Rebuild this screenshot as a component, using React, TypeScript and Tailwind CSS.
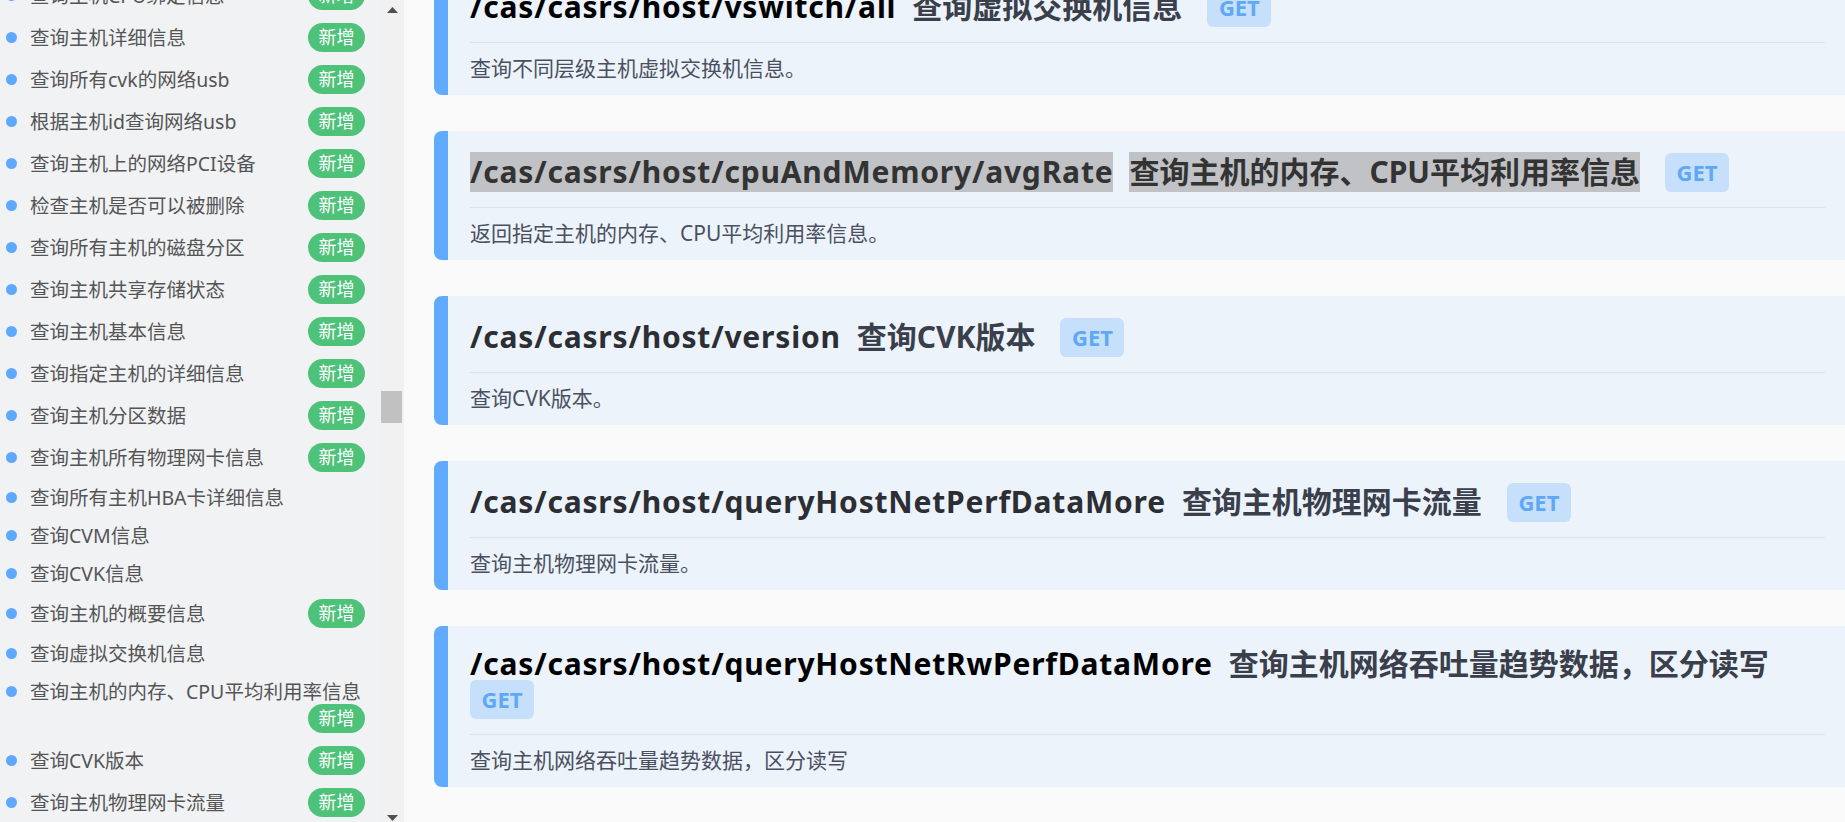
import React from "react";

type NavItem = { label: string; isNew: boolean };

const navItems: NavItem[] = [
  { label: "查询主机CPU绑定信息", isNew: true },
  { label: "查询主机详细信息", isNew: true },
  { label: "查询所有cvk的网络usb", isNew: true },
  { label: "根据主机id查询网络usb", isNew: true },
  { label: "查询主机上的网络PCI设备", isNew: true },
  { label: "检查主机是否可以被删除", isNew: true },
  { label: "查询所有主机的磁盘分区", isNew: true },
  { label: "查询主机共享存储状态", isNew: true },
  { label: "查询主机基本信息", isNew: true },
  { label: "查询指定主机的详细信息", isNew: true },
  { label: "查询主机分区数据", isNew: true },
  { label: "查询主机所有物理网卡信息", isNew: true },
  { label: "查询所有主机HBA卡详细信息", isNew: false },
  { label: "查询CVM信息", isNew: false },
  { label: "查询CVK信息", isNew: false },
  { label: "查询主机的概要信息", isNew: true },
  { label: "查询虚拟交换机信息", isNew: false },
  { label: "查询主机的内存、CPU平均利用率信息", isNew: true },
  { label: "查询CVK版本", isNew: true },
  { label: "查询主机物理网卡流量", isNew: true },
];

type Api = {
  path: string;
  title: string;
  desc: string;
  pathColor: string;
  selected?: boolean;
};

const apis: Api[] = [
  {
    path: "/cas/casrs/host/vswitch/all",
    title: "查询虚拟交换机信息",
    desc: "查询不同层级主机虚拟交换机信息。",
    pathColor: "text-black",
  },
  {
    path: "/cas/casrs/host/cpuAndMemory/avgRate",
    title: "查询主机的内存、CPU平均利用率信息",
    desc: "返回指定主机的内存、CPU平均利用率信息。",
    pathColor: "text-[#333333]",
    selected: true,
  },
  {
    path: "/cas/casrs/host/version",
    title: "查询CVK版本",
    desc: "查询CVK版本。",
    pathColor: "text-[#2c2e33]",
  },
  {
    path: "/cas/casrs/host/queryHostNetPerfDataMore",
    title: "查询主机物理网卡流量",
    desc: "查询主机物理网卡流量。",
    pathColor: "text-[#2c2e33]",
  },
  {
    path: "/cas/casrs/host/queryHostNetRwPerfDataMore",
    title: "查询主机网络吞吐量趋势数据，区分读写",
    desc: "查询主机网络吞吐量趋势数据，区分读写",
    pathColor: "text-black",
  },
];

function Sidebar() {
  return (
    <div className="flex h-full w-[404px] shrink-0">
      {/* List */}
      <div className="h-full w-[381px] overflow-hidden bg-[#f0f2f4]">
        <ul className="mt-[-26px] pl-[6px] pr-[16px]">
          {navItems.map((item) => (
            <li
              key={item.label}
              className="flex flex-wrap items-center py-[6.5px]"
            >
              <div className="flex items-center gap-[13px]">
                <span className="h-[11px] w-[11px] shrink-0 rounded-full bg-[#5fa8ff]" />
                <span className="whitespace-nowrap text-[19.5px] leading-[25px] text-[#555555]">
                  {item.label}
                </span>
              </div>
              {item.isNew && (
                <span className="ml-auto flex h-[29px] w-[57px] items-center justify-center rounded-full bg-[#4fc27a] text-[18px] text-white">
                  新增
                </span>
              )}
            </li>
          ))}
        </ul>
      </div>

      {/* Scrollbar */}
      <div className="flex h-full w-[23px] flex-col bg-[#f1f1f1]">
        <div className="flex h-[20px] items-start justify-center pt-[7px]">
          <svg width="11" height="6" viewBox="0 0 11 6">
            <path d="M5.5 0L11 6H0z" fill="#505050" />
          </svg>
        </div>
        <div className="mt-[371px] h-[32px] w-[21px] bg-[#c1c1c1]" />
        <div className="mt-auto flex h-[20px] items-end justify-center pb-[1px]">
          <svg width="11" height="6" viewBox="0 0 11 6">
            <path d="M0 0H11L5.5 6z" fill="#505050" />
          </svg>
        </div>
      </div>
    </div>
  );
}

function ApiCard({ api }: { api: Api }) {
  const sel = api.selected;
  return (
    <div className="mb-[36px] flex overflow-hidden rounded-l-[8px] bg-[#ecf3fb]">
      <div className="w-[14px] shrink-0 bg-[#60aaff]" />
      <div className="flex-1 pb-[12px] pl-[22px] pr-[20px] pt-[22px]">
        <div className="flex flex-wrap items-center">
          <span
            className={`mr-[16px] text-[30px] font-bold leading-[32px] tracking-[0.8px] ${api.pathColor} ${
              sel ? "-my-[4px] bg-[#c0c2c5] py-[4px]" : ""
            }`}
          >
            {api.path}
          </span>
          <span
            className={`mr-[25px] text-[30px] font-bold leading-[32px] ${
              sel
                ? "-my-[4px] bg-[#c0c2c5] py-[4px] text-[#333333]"
                : "text-[#3a3f4b]"
            }`}
          >
            {api.title}
          </span>
          <span className="-my-[0.5px] flex h-[39px] w-[64px] items-center justify-center rounded-[6px] bg-[#c6e0fb] text-[22px] font-bold text-[#5fa8f5]">
            GET
          </span>
        </div>
        <div className="mt-[16px] h-px bg-[#dce3ea]" />
        <p className="pt-[10px] text-[21px] leading-[30px] text-[#4b5060]">
          {api.desc}
        </p>
      </div>
    </div>
  );
}

export default function App() {
  return (
    <div
      className="flex h-[822px] w-full overflow-hidden bg-[#fafafa]"
      style={{ fontFamily: '"Noto Sans", "Noto Sans CJK SC", sans-serif' }}
    >
      <Sidebar />
      <main className="h-full min-w-0 flex-1 overflow-hidden pl-[30px]">
        <div className="mt-[-34px]">
          {apis.map((api) => (
            <ApiCard key={api.path} api={api} />
          ))}
          <div className="h-[60px] rounded-l-[8px] border-l-[14px] border-[#60aaff] bg-[#ecf3fb]" />
        </div>
      </main>
    </div>
  );
}
